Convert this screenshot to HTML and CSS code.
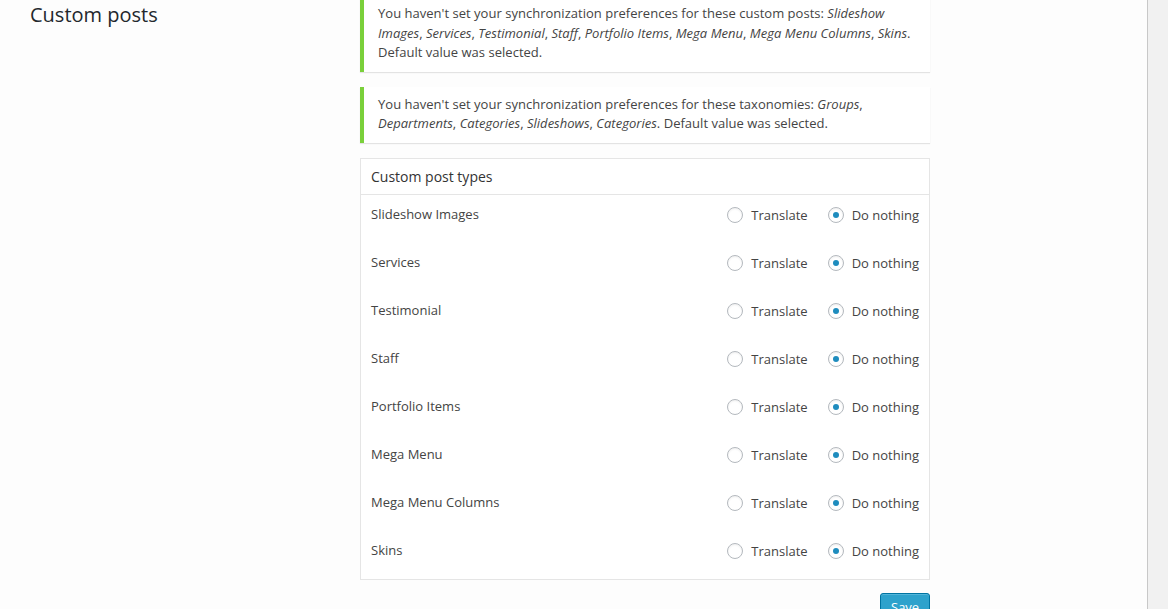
FILE: index.html
```html
<!DOCTYPE html>
<html lang="en">
<head>
    <meta charset="UTF-8">
    <title>Custom posts</title>
    <link rel="stylesheet" href="styles.css">
</head>
<body>
    <div class="page">
        <div class="main">
            <!-- Left column -->
            <div class="side-title">
                <h2>Custom posts</h2>
            </div>

            <!-- Right column -->
            <div class="content">
                <div class="notice notice-first">
                    <p>You haven't set your synchronization preferences for these custom posts: <em>Slideshow Images</em>, <em>Services</em>, <em>Testimonial</em>, <em>Staff</em>, <em>Portfolio Items</em>, <em>Mega Menu</em>, <em>Mega Menu Columns</em>, <em>Skins</em>. Default value was selected.</p>
                </div>
                <div class="notice">
                    <p>You haven't set your synchronization preferences for these taxonomies: <em>Groups</em>, <em>Departments</em>, <em>Categories</em>, <em>Slideshows</em>, <em>Categories</em>. Default value was selected.</p>
                </div>

                <div class="sync-box">
                    <div class="sync-header">Custom post types</div>

                    <div class="sync-row">
                        <span class="row-label">Slideshow Images</span>
                        <div class="choices">
                            <label class="choice"><span class="radio"></span>Translate</label>
                            <label class="choice"><span class="radio checked"></span>Do nothing</label>
                        </div>
                    </div>
                    <div class="sync-row">
                        <span class="row-label">Services</span>
                        <div class="choices">
                            <label class="choice"><span class="radio"></span>Translate</label>
                            <label class="choice"><span class="radio checked"></span>Do nothing</label>
                        </div>
                    </div>
                    <div class="sync-row">
                        <span class="row-label">Testimonial</span>
                        <div class="choices">
                            <label class="choice"><span class="radio"></span>Translate</label>
                            <label class="choice"><span class="radio checked"></span>Do nothing</label>
                        </div>
                    </div>
                    <div class="sync-row">
                        <span class="row-label">Staff</span>
                        <div class="choices">
                            <label class="choice"><span class="radio"></span>Translate</label>
                            <label class="choice"><span class="radio checked"></span>Do nothing</label>
                        </div>
                    </div>
                    <div class="sync-row">
                        <span class="row-label">Portfolio Items</span>
                        <div class="choices">
                            <label class="choice"><span class="radio"></span>Translate</label>
                            <label class="choice"><span class="radio checked"></span>Do nothing</label>
                        </div>
                    </div>
                    <div class="sync-row">
                        <span class="row-label">Mega Menu</span>
                        <div class="choices">
                            <label class="choice"><span class="radio"></span>Translate</label>
                            <label class="choice"><span class="radio checked"></span>Do nothing</label>
                        </div>
                    </div>
                    <div class="sync-row">
                        <span class="row-label">Mega Menu Columns</span>
                        <div class="choices">
                            <label class="choice"><span class="radio"></span>Translate</label>
                            <label class="choice"><span class="radio checked"></span>Do nothing</label>
                        </div>
                    </div>
                    <div class="sync-row">
                        <span class="row-label">Skins</span>
                        <div class="choices">
                            <label class="choice"><span class="radio"></span>Translate</label>
                            <label class="choice"><span class="radio checked"></span>Do nothing</label>
                        </div>
                    </div>
                </div>

                <div class="actions">
                    <button class="button-primary">Save</button>
                </div>
            </div>
        </div>
        <div class="right-strip"></div>
    </div>
</body>
</html>
```

FILE: styles.css
```css
/* General */
html, body {
    margin: 0;
    height: 100%;
    overflow: hidden;
}
body {
    font-family: "Open Sans", sans-serif;
    font-size: 13px;
    color: #444;
    background: #f1f1f1;
}

.page {
    display: flex;
    height: 100%;
}

/* Main area */
.main {
    width: 1147px;
    background: #fdfdfd;
    border-right: 1px solid #c8c8c8;
    display: flex;
    align-items: flex-start;
}
.right-strip {
    flex: 1;
    background: #f1f1f1;
}

/* Left title column */
.side-title {
    width: 330px;
    padding-left: 30px;
}
.side-title h2 {
    margin: 0;
    font-size: 20px;
    font-weight: 400;
    line-height: 30px;
    color: #23282d;
}

/* Right column */
.content {
    width: 570px;
    display: flex;
    flex-direction: column;
}

/* Notices */
.notice {
    background: #fff;
    border-left: 4px solid #7ad03a;
    box-shadow: 0 1px 1px rgba(0, 0, 0, 0.1);
    padding: 8px 14px 9px;
    margin-bottom: 15px;
}
.notice-first {
    margin-top: -4px;
}
.notice p {
    margin: 0;
    line-height: 19.5px;
    letter-spacing: 0.02px;
}

/* Sync table */
.sync-box {
    background: #fff;
    border: 1px solid #e5e5e5;
}
.sync-header {
    font-size: 14px;
    line-height: 20px;
    padding: 8px 10px 7px;
    border-bottom: 1px solid #e5e5e5;
    color: #333;
}
.sync-row {
    display: flex;
    justify-content: space-between;
    align-items: flex-start;
    height: 48px;
    box-sizing: border-box;
    padding: 9px 10px 0;
    line-height: 20px;
}
.row-label {
    color: #444;
}
.choices {
    display: flex;
    gap: 20px;
    padding-top: 1px;
}
.choice {
    display: flex;
    align-items: center;
    gap: 8px;
}

/* Radio buttons */
.radio {
    width: 14px;
    height: 14px;
    border: 1px solid #b4b9be;
    border-radius: 50%;
    background: #fff;
    box-shadow: inset 0 1px 2px rgba(0, 0, 0, 0.07);
    display: flex;
    align-items: center;
    justify-content: center;
}
.radio.checked:before {
    content: "";
    width: 6px;
    height: 6px;
    border-radius: 50%;
    background: #1e8cbe;
}

/* Save button */
.actions {
    display: flex;
    justify-content: flex-end;
    margin-top: 13px;
}
.button-primary {
    font-family: "Open Sans", sans-serif;
    font-size: 13px;
    color: #fff;
    background: #2ea2cc;
    border: 1px solid #0074a2;
    border-radius: 3px;
    box-shadow: inset 0 1px 0 rgba(120, 200, 230, 0.5);
    padding: 0 10px;
    height: 28px;
    line-height: 26px;
    width: 50px;
}
```
